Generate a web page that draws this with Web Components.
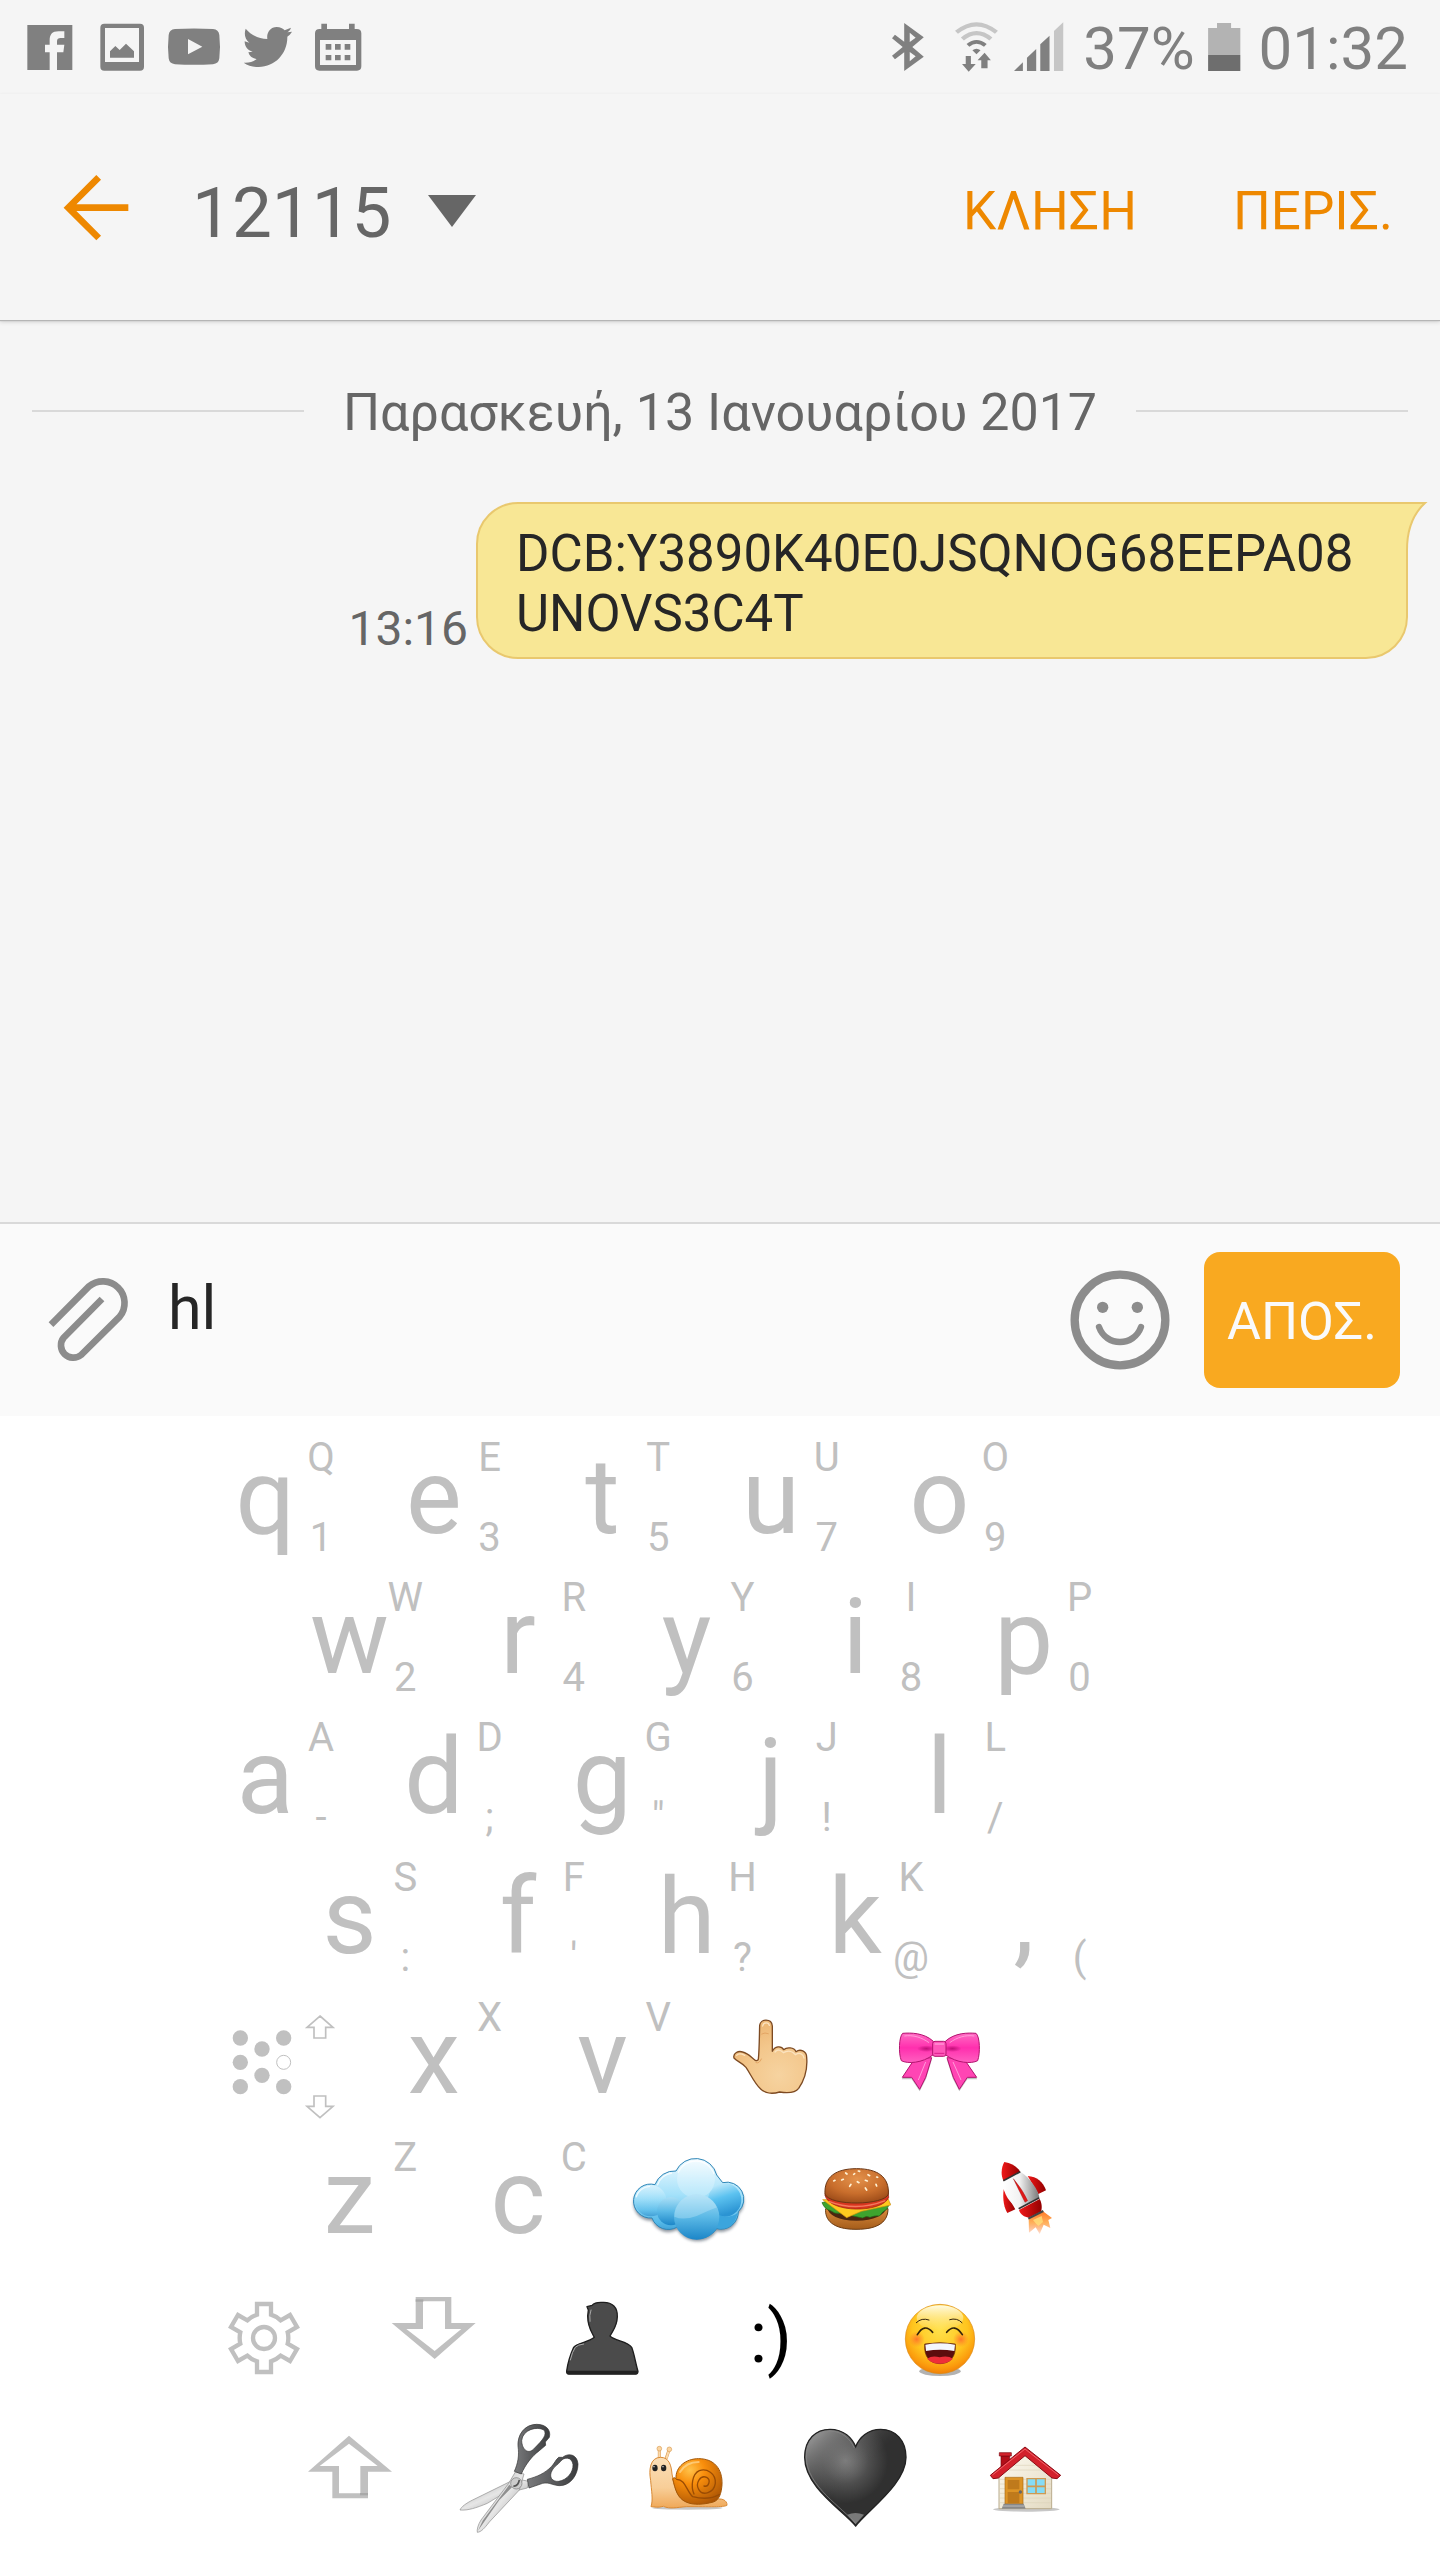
<!DOCTYPE html>
<html lang="el">
<head>
<meta charset="utf-8">
<meta name="viewport" content="width=device-width, initial-scale=1">
<title>12115</title>
<style>
  html, body { margin: 0; background: #fff; }
  body { font-family: Roboto, "Liberation Sans", sans-serif; }
</style>
</head>
<body>
<messaging-app></messaging-app>

<script>
const define = (name, html, setup) => {
  const template = document.createElement('template');
  template.innerHTML = html;
  customElements.define(name, class extends HTMLElement {
    constructor() {
      super();
      this.attachShadow({ mode: 'open' }).append(template.content.cloneNode(true));
    }
    connectedCallback() { if (setup) setup(this, this.shadowRoot); }
  });
};

/* ---------- key artwork ---------- */
const art = {
  dots: `<svg viewBox="-87 21 504 420"><g fill="#c0c0c0">
    <circle cx="94" cy="174" r="23"/><circle cx="94" cy="247" r="23"/><circle cx="94" cy="320" r="23"/>
    <circle cx="159" cy="207" r="23"/><circle cx="159" cy="286" r="23"/>
    <circle cx="224" cy="174" r="23"/><circle cx="224" cy="320" r="23"/></g>
    <g fill="none" stroke="#c0c0c0"><circle cx="224" cy="247" r="21" stroke-width="3"/>
    <path stroke-width="5" d="M333 108L372 142H350V174H315V142H294ZM333 413L372 379H350V348H315V379H294Z"/></g></svg>`,
  gear: `<svg viewBox="-87 -9 504 420"><g transform="translate(165 204)" fill="none" stroke="#c0c0c0" stroke-width="13">
    <circle r="33"/>
    <path d="M-21-102H21V-70A73 73 0 0 1 50-53L78-69L99-33L71-17A73 73 0 0 1 71 17L99 33L78 69L50 53A73 73 0 0 1 21 70V102H-21V70A73 73 0 0 1-50 53L-78 69L-99 33L-71 17A73 73 0 0 1-71-17L-99-33L-78-69L-50-53A73 73 0 0 1-21-70Z"/></g></svg>`,
  down: `<svg viewBox="418 -9 504 420"><path fill="#c0c0c0" fill-rule="evenodd" d="M618 81H725V159H798L675 267L546 159H618ZM640 94V177H590L675 243L755 177H706V94Z"/><path fill="#a9a9a9" d="M618 88H641V95H618Z"/></svg>`,
  up: `<svg viewBox="165 411 504 420"><path fill="#c0c0c0" fill-rule="evenodd" d="M417 497L546 605H474V685H367V605H294ZM417 521L329 588H387V670H451V588H503Z"/><path fill="#a9a9a9" d="M450 669H474V676H450Z"/></svg>`,
  hand: `<svg viewBox="260 -9 504 420"><defs>
    <radialGradient id="g" cx=".62" cy=".75" r=".7"><stop offset="0" stop-color="#f6d3a0"/><stop offset=".6" stop-color="#f3c78c"/><stop offset="1" stop-color="#eeb978"/></radialGradient></defs>
    <path fill="url(#g)" stroke="#7d4a22" stroke-width="4" stroke-linejoin="round" d="M477 208C480 180 480 140 481 106C483 86 517 84 519 108L519 184C526 168 546 166 553 179C562 171 584 171 590 185C602 176 622 182 622 202C625 236 615 270 598 295C585 312 560 309 541 306C515 314 498 310 484 297C464 278 455 254 440 232C428 218 412 214 404 204C400 188 418 182 430 186C448 190 457 204 468 211C472 213 476 211 477 208Z"/>
    <path fill="none" stroke="#fbe3c0" stroke-width="4" stroke-linecap="round" d="M490 108C492 96 508 96 510 106M412 196C418 189 428 192 436 196M527 186C534 176 545 180 552 188C566 180 580 184 588 194C602 186 612 192 614 204"/>
    <path fill="none" stroke="#e3a564" stroke-width="3" stroke-linecap="round" d="M487 132Q497 126 507 131M486 207Q480 222 470 218"/></svg>`,
  bow: `<svg viewBox="765 -9 504 420"><defs>
    <linearGradient id="g" x1="0" y1="0" x2="0" y2="1"><stop offset="0" stop-color="#ff6cc4"/><stop offset=".5" stop-color="#ff2fae"/><stop offset="1" stop-color="#ff5fc0"/></linearGradient>
    <radialGradient id="d"><stop offset="0" stop-color="#c00f78"/><stop offset="1" stop-color="#c00f78" stop-opacity="0"/></radialGradient></defs>
    <path opacity=".25" d="M942 219L908 268L938 268L962 304L981 267L999 208ZM1100 219L1135 268L1105 268L1081 304L1062 267L1043 208Z"/>
    <g stroke="#b3146f" stroke-width="3" stroke-linejoin="round">
    <path fill="#ff45b4" d="M942 214L910 262L938 262L962 298L980 262L998 203L968 205Z"/>
    <path fill="#ff45b4" d="M1100 214L1133 262L1105 262L1081 298L1063 262L1044 203L1072 205Z"/>
    <path fill="url(#g)" d="M1003 154C975 128 935 128 911 130C900 140 898 190 907 212C925 222 970 220 1003 194Z"/>
    <path fill="url(#g)" d="M1039 154C1067 128 1107 128 1131 130C1143 140 1144 190 1136 212C1118 222 1073 220 1039 194Z"/></g>
    <ellipse cx="982" cy="176" rx="28" ry="10" fill="url(#d)"/><ellipse cx="1060" cy="176" rx="28" ry="10" fill="url(#d)"/>
    <path fill="none" stroke="#ff9bd8" stroke-width="3" d="M916 138C942 134 968 142 990 158M1126 138C1100 134 1074 142 1052 158M980 216L958 270M1062 216L1086 270"/>
    <rect x="1001" y="154" width="40" height="45" rx="7" fill="#ff57ba" stroke="#b3146f" stroke-width="3"/>
    <path stroke="#ff9bd8" stroke-width="4" d="M1007 162H1035"/><path stroke="#d91f8c" stroke-width="3" d="M1006 190H1036"/></svg>`,
  cloud: `<svg viewBox="6 411 504 420"><defs>
    <linearGradient id="g" x1="0" y1="0" x2="0" y2="1"><stop offset="0" stop-color="#f2fbff"/><stop offset=".45" stop-color="#a4e1fa"/><stop offset=".8" stop-color="#55b9e8"/><stop offset="1" stop-color="#2484c4"/></linearGradient>
    <linearGradient id="p" x1="0" y1="0" x2="0" y2="1"><stop offset="0" stop-color="#a9def6"/><stop offset=".5" stop-color="#5bb9e6"/><stop offset="1" stop-color="#1c86c8"/></linearGradient>
    <linearGradient id="r" x1="0" y1="0" x2=".3" y2="1"><stop offset="0" stop-color="#d8f3fd"/><stop offset=".5" stop-color="#5cc2f0"/><stop offset="1" stop-color="#2b94d3"/></linearGradient>
    <filter id="b" x="-20%" y="-20%" width="140%" height="150%"><feGaussianBlur stdDeviation="5"/></filter></defs>
    <path filter="url(#b)" opacity=".5" fill="#234" d="M165 592A62 62 0 0 1 228 551A65 65 0 0 1 350 563L368 586A51 51 0 0 1 415 673A52 52 0 0 1 350 724A70 70 0 0 1 232 719A52 52 0 0 1 156 692A51 51 0 1 1 165 592Z"/>
    <path fill="url(#g)" stroke="#2e86b8" stroke-width="3" d="M165 584A62 62 0 0 1 228 543A65 65 0 0 1 350 555L368 578A51 51 0 0 1 415 665A52 52 0 0 1 350 716A70 70 0 0 1 232 711A52 52 0 0 1 156 684A51 51 0 1 1 165 584Z"/>
    <circle cx="374" cy="630" r="50" fill="url(#r)"/><path fill="#3ba5dd" d="M324 640Q340 690 350 714Q400 725 413 668Q400 680 374 680Q340 676 324 640Z"/>
    <circle cx="152" cy="632" r="47" fill="url(#g)" opacity=".55"/>
    <circle cx="213" cy="664" r="42" fill="url(#p)"/>
    <circle cx="288" cy="567" r="57" fill="#fff" opacity=".25"/>
    <circle cx="290" cy="681" r="68" fill="url(#p)"/><path fill="#e4f7ff" opacity=".28" d="M223 680A67 67 0 0 1 351 652Q320 664 290 678Q250 692 223 680Z"/>
    <path fill="none" stroke="#fff" stroke-width="4" opacity=".75" d="M234 548A58 58 0 0 1 342 552M172 586A52 52 0 0 1 216 549M108 622A45 45 0 0 1 150 589"/></svg>`,
  burger: `<svg viewBox="512 411 504 420"><defs>
    <radialGradient id="g" cx=".5" cy=".3" r=".7"><stop offset="0" stop-color="#e3924c"/><stop offset=".6" stop-color="#c96e2c"/><stop offset="1" stop-color="#a04e1a"/></radialGradient>
    <linearGradient id="p" x1="0" y1="0" x2="0" y2="1"><stop offset="0" stop-color="#d98a3c"/><stop offset="1" stop-color="#a45c1a"/></linearGradient></defs>
    <path fill="url(#p)" stroke="#6c3b12" stroke-width="3" d="M679 656C676 690 700 718 770 718C842 718 866 692 866 656Z"/>
    <path fill="#4b2610" d="M682 650Q690 690 772 692Q850 690 864 650Z"/>
    <path fill="#3ea42e" stroke="#1f6a1a" stroke-width="2" d="M668 638Q676 658 694 662Q706 672 722 670L790 684Q800 676 812 682Q826 676 840 678Q850 664 862 658L872 640Q770 600 668 638Z"/>
    <path fill="#ffc91f" stroke="#d6920e" stroke-width="2" d="M670 629L742 683L786 664L874 645L866 625Z"/>
    <path fill="#d8351f" stroke="#8e1b10" stroke-width="2" d="M677 616C690 670 850 670 868 622L866 600H680Z"/><path fill="none" stroke="#f47a5e" stroke-width="4" d="M688 634Q770 666 858 632"/>
    <path fill="url(#g)" stroke="#6b3512" stroke-width="3" d="M677 612C674 560 710 536 772 536C836 536 870 562 867 612C858 646 690 650 677 612Z"/>
    <g stroke="#fff3d6" stroke-width="5" stroke-linecap="round"><path d="M739 549L743 552M763 553L766 551M777 543L781 544M806 554L811 557M832 561L835 562M703 573L707 571M727 570L732 568M751 589L755 583M774 575L779 578M798 571L804 573M798 594L802 600M830 583L832 588"/></g></svg>`,
  rocket: `<svg viewBox="1018 411 504 420"><defs>
    <linearGradient id="g"><stop offset="0" stop-color="#fff"/><stop offset=".45" stop-color="#f2f2f2"/><stop offset="1" stop-color="#777"/></linearGradient>
    <linearGradient id="r"><stop offset="0" stop-color="#f01818"/><stop offset="1" stop-color="#920000"/></linearGradient>
    <linearGradient id="f" x1="0" y1="0" x2="0" y2="1"><stop offset="0" stop-color="#ff7a2a"/><stop offset=".5" stop-color="#ffb05a"/><stop offset="1" stop-color="#ff8a50" stop-opacity=".25"/></linearGradient></defs>
    <path fill="url(#f)" d="M1287 686L1330 664L1357 684L1346 690L1352 714L1332 704L1320 732L1308 712L1288 728Z"/>
    <path fill="#ffe07a" d="M1300 690L1326 678L1330 696L1316 708L1308 700Z" opacity=".8"/>
    <path fill="url(#r)" d="M1284 558C1312 560 1330 575 1339 601L1316 612Z"/>
    <path fill="url(#r)" d="M1212 598C1208 630 1214 655 1223 669L1247 658Z"/>
    <path fill="url(#g)" d="M1211 572L1262 545C1290 562 1316 600 1319 622L1257 656C1230 640 1206 606 1211 572Z"/>
    <path fill="url(#r)" d="M1214 516C1238 520 1254 532 1262 545L1211 572C1202 552 1206 530 1214 516Z"/>
    <path fill="none" stroke="#333" stroke-width="5" d="M1211 572L1262 545M1257 656L1319 623"/>
    <path fill="#e01818" stroke="#8b0d0d" stroke-width="1" d="M1241 566Q1270 600 1284 632L1276 637Q1260 605 1241 566Z"/>
    <path fill="url(#r)" d="M1258 660L1320 627C1328 642 1327 656 1324 665L1287 683C1274 681 1262 674 1258 660Z"/>
    <path stroke="#444" stroke-width="6" d="M1286 686L1331 663"/></svg>`,
  person: `<svg viewBox="924 -9 504 420">
    <path fill="#4b4b4b" stroke="#1e1e1e" stroke-width="4" stroke-linejoin="round" d="M1134 110L1149 106C1160 94 1175 98 1184 97C1210 97 1226 112 1225 140C1224 170 1212 180 1203 198C1218 214 1255 212 1268 232C1276 252 1280 282 1287 304Q1286 312 1280 312H1080Q1072 312 1073 303C1076 280 1086 250 1094 232C1104 218 1138 218 1156 202C1148 186 1136 172 1136 138L1138 120Z"/>
    <path fill="#222" d="M1074 302H1286Q1286 313 1280 313H1080Q1073 313 1074 302Z"/>
    <path fill="none" stroke="#aaa" stroke-width="3" stroke-linecap="round" d="M1146 120Q1140 136 1143 154M1084 270Q1090 244 1099 232Q1106 224 1124 222"/></svg>`,
  grin: `<svg viewBox="765 -9 504 420"><defs>
    <radialGradient id="g" cx=".5" cy=".36" r=".66"><stop offset="0" stop-color="#ffe14a"/><stop offset=".6" stop-color="#ffc51e"/><stop offset=".85" stop-color="#fb9a0c"/><stop offset="1" stop-color="#ee7a08"/></radialGradient>
    <linearGradient id="h" x1="0" y1="0" x2="0" y2="1"><stop offset="0" stop-color="#fffbe0"/><stop offset="1" stop-color="#fff6b8" stop-opacity="0"/></linearGradient>
    <radialGradient id="k"><stop offset="0" stop-color="#ff6a2a" stop-opacity=".85"/><stop offset="1" stop-color="#ff7a2a" stop-opacity="0"/></radialGradient></defs>
    <ellipse cx="1023" cy="304" rx="62" ry="14" fill="#000" opacity=".3"/>
    <circle cx="1023" cy="207" r="104" fill="url(#g)" stroke="#d98a12" stroke-width="2"/>
    <ellipse cx="1023" cy="144" rx="70" ry="38" fill="url(#h)"/>
    <circle cx="953" cy="208" r="24" fill="url(#k)"/><circle cx="1086" cy="208" r="24" fill="url(#k)"/>
    <g fill="none" stroke="#33230a" stroke-linecap="round"><path stroke-width="5" d="M955 194Q976 158 1001 187M1043 187Q1067 158 1090 194"/><path stroke-width="3" d="M952 158Q968 142 990 150M1052 149Q1074 142 1089 158"/></g>
    <path fill="#5d0d0d" stroke="#6b3408" stroke-width="2" d="M977 222Q1023 214 1069 222C1072 262 1052 281 1023 281C994 281 974 262 977 222Z"/>
    <path fill="#ee2f39" d="M984 266Q1000 256 1022 262Q1046 256 1062 266Q1046 281 1023 281Q999 281 984 266Z"/>
    <path fill="#f4f7fc" d="M979 224Q1023 216 1068 224L1066 243Q1023 236 981 243Z"/></svg>`,
  scissors: `<svg viewBox="671 411 504 420"><defs>
    <linearGradient id="g" x1="0" y1="0" x2="1" y2="1"><stop offset="0" stop-color="#9a9a9a"/><stop offset=".5" stop-color="#e6e6e6"/><stop offset="1" stop-color="#8c8c8c"/></linearGradient>
    <linearGradient id="h"><stop offset="0" stop-color="#7a7b7d"/><stop offset="1" stop-color="#3b3c3e"/></linearGradient></defs>
    <path fill="url(#g)" stroke="#8d8d8d" stroke-width="2" d="M958 634L920 626L790 690C770 700 756 710 752 720C776 722 800 714 834 700L880 672L954 654Z"/>
    <path fill="url(#g)" stroke="#8d8d8d" stroke-width="2" d="M918 606L898 640L815 750C806 764 802 780 804 787C816 786 826 774 840 756L930 660L944 612Z"/>
    <path fill="#8f8f8f" d="M900 644L820 752L806 782L870 690L908 652Z"/>
    <path fill="url(#h)" fill-rule="evenodd" stroke="#333" stroke-width="2" d="M915 604C926 580 930 556 926 528C924 494 946 463 982 463C1010 463 1026 480 1020 502L1008 516L1009 526L990 542C968 558 948 584 936 612ZM937 512C938 540 958 556 976 534C1000 510 1014 494 1004 480C984 468 940 478 937 512Z"/>
    <path fill="url(#h)" fill-rule="evenodd" stroke="#333" stroke-width="2" d="M954 628C984 620 1006 610 1026 590C1036 580 1038 570 1048 562L1060 562C1076 548 1104 552 1106 582C1106 616 1082 648 1050 647C1030 646 1020 636 1000 640L959 654ZM1029 600C1016 622 1030 636 1048 634C1074 630 1092 606 1091 584C1088 560 1064 560 1054 574C1046 584 1034 590 1029 600Z"/>
    <circle cx="921" cy="640" r="17" fill="#ccc" stroke="#777" stroke-width="2"/><path stroke="#555" stroke-width="5" d="M912 648Q926 650 930 630" fill="none"/></svg>`,
  snail: `<svg viewBox="6 411 504 420"><defs>
    <linearGradient id="g" x1="0" y1="0" x2="0" y2="1"><stop offset="0" stop-color="#fbdfb8"/><stop offset=".6" stop-color="#f8ce98"/><stop offset="1" stop-color="#efa858"/></linearGradient>
    <radialGradient id="s" cx=".35" cy=".25" r=".85"><stop offset="0" stop-color="#ffc24a"/><stop offset=".35" stop-color="#f98e0c"/><stop offset="1" stop-color="#a85204"/></radialGradient></defs>
    <ellipse cx="262" cy="714" rx="106" ry="5" opacity=".22"/>
    <path fill="none" stroke="#d99b52" stroke-width="9" stroke-linecap="round" d="M178 564V540M199 564L207 540"/><path fill="none" stroke="#fbd9ab" stroke-width="6" stroke-linecap="round" d="M178 566V540M199 566L207 540"/>
    <circle cx="178" cy="536" r="7" fill="#fbd6a4" stroke="#d99b52" stroke-width="2"/><circle cx="208" cy="538" r="7" fill="#fbd6a4" stroke="#d99b52" stroke-width="2"/>
    <path fill="url(#g)" stroke="#d98a35" stroke-width="3" d="M153 710C160 690 154 660 152 632C146 600 150 562 182 562C208 562 214 588 216 612C224 660 236 690 270 698L340 690C364 682 382 690 381 706C370 712 330 710 260 710C230 712 210 718 190 709C176 714 160 710 153 710Z"/>
    <path fill="url(#s)" stroke="#a35606" stroke-width="3" d="M228 626C226 590 258 566 296 566C342 566 368 596 366 644C364 670 358 690 340 696C310 704 280 706 258 696C232 684 226 660 218 626Q222 620 228 626Z"/>
    <path fill="none" stroke="#9a4c04" stroke-width="4" stroke-linecap="round" d="M312 648C326 652 334 630 320 622C300 614 286 640 296 658C308 680 342 668 346 640C348 610 320 594 298 602C276 612 272 650 282 672M230 628C256 628 260 664 278 680C310 688 340 684 358 674"/>
    <path fill="none" stroke="#ffe2a8" stroke-width="6" opacity=".6" stroke-linecap="round" d="M240 606Q258 576 296 576"/>
    <ellipse cx="165" cy="594" rx="8" ry="10" fill="#222"/><ellipse cx="191" cy="594" rx="8" ry="10" fill="#222"/><circle cx="162" cy="590" r="2" fill="#fff"/><circle cx="189" cy="590" r="2" fill="#fff"/></svg>`,
  heart: `<svg viewBox="512 411 504 420"><defs>
    <radialGradient id="g" gradientUnits="userSpaceOnUse" cx="738" cy="572" r="128"><stop offset="0" stop-color="#858585"/><stop offset=".55" stop-color="#4e4e4e"/><stop offset="1" stop-color="#303030"/></radialGradient>
    <linearGradient id="h" gradientUnits="userSpaceOnUse" x1="640" y1="490" x2="760" y2="620"><stop offset="0" stop-color="#9a9a9a"/><stop offset="1" stop-color="#555" stop-opacity="0"/></linearGradient></defs>
    <path fill="url(#g)" d="M769 768C730 720 616 652 616 562C616 508 650 478 692 478C734 478 758 505 769 530C780 502 806 478 844 478C888 478 920 510 920 562C920 640 812 715 769 768Z"/>
    <path fill="url(#h)" stroke="#222" stroke-width="4" d="M769 768C730 720 616 652 616 562C616 508 650 478 692 478C734 478 758 505 769 530C780 502 806 478 844 478C888 478 920 510 920 562C920 640 812 715 769 768Z"/>
    <path fill="none" stroke="#888" stroke-width="3" opacity=".7" d="M769 761C732 714 621 648 621 562C621 512 652 483 692 483C728 483 752 506 765 534"/>
    <path fill="#aaa" opacity=".6" d="M769 762L744 734Q768 724 794 734Z"/></svg>`,
  house: `<svg viewBox="1018 411 504 420"><defs>
    <linearGradient id="g" x1="0" y1="0" x2="1" y2="1"><stop offset="0" stop-color="#fdfaf0"/><stop offset="1" stop-color="#e3dac2"/></linearGradient></defs>
    <ellipse cx="1280" cy="718" rx="100" ry="7" opacity=".22"/>
    <path fill="#b30f1a" stroke="#7d0710" stroke-width="2" d="M1204 558H1230V590L1204 612Z"/><path fill="#d3222c" stroke="#7d0710" stroke-width="2" d="M1199 548H1235V558H1199Z"/>
    <path fill="url(#g)" stroke="#b9ab8c" stroke-width="3" d="M1198 716V612L1276 550L1356 612V716Z"/>
    <path stroke="#ddd3bb" stroke-width="2" d="M1201 628H1354M1201 642H1354M1201 656H1354M1201 670H1354M1201 684H1354M1201 698H1354M1226 600H1328M1244 586H1310"/>
    <path fill="#d3212c" stroke="#8a0b14" stroke-width="3" stroke-linejoin="round" d="M1276 531L1383 616L1372 626L1357 624L1276 557L1196 624L1180 626L1172 616Z"/>
    <path fill="none" stroke="#f2646a" stroke-width="3" d="M1178 615L1276 537L1376 615"/>
    <path fill="#dd9426" stroke="#a96a14" stroke-width="2" d="M1216 622H1270V702H1216Z"/><path fill="#bf7a1c" d="M1224 630H1259V658H1224ZM1224 666H1259V700H1224Z"/><circle cx="1262" cy="666" r="5" fill="#666"/>
    <path fill="#888" d="M1212 701H1272L1278 716H1206Z"/><path stroke="#bbb" stroke-width="3" d="M1210 708H1274"/>
    <path fill="#85dcf6" stroke="#cf9a52" stroke-width="4" d="M1282 626H1337V671H1282Z"/><path stroke="#cf9a52" stroke-width="5" d="M1309 626V671M1282 649H1337"/></svg>`
};

/* ---------- status bar ---------- */
define('status-bar', `
<style>
  :host { display: flex; align-items: center; justify-content: space-between; height: 94px; padding: 0 32px 0 22px; color: #808080; font-size: 60px; line-height: 70px; }
  .group { display: flex; align-items: center; }
  .apps { gap: 16px; } .system { gap: 12px; }
  span, time { padding-top: 4px; }
  svg { display: block; height: 56px; width: 56px; fill: #808080; }
  .bluetooth { width: 51px; } .wifi { width: 47px; } .signal { width: 57px; } .battery { width: 40px; }
</style>
<div class="group apps">
  <svg viewBox="66 57 168 168"><path fill-rule="evenodd" d="M82 75H217V210H171V157H190L193 134H171V124C171 116 175 114 182 114H193V94H176C156 94 149 104 149 121V134H135V157H149V210H82Z"/></svg>
  <svg viewBox="282 57 168 168"><path fill-rule="evenodd" d="M313 71H420Q432 71 432 83V200Q432 212 420 212H313Q301 212 301 200V83Q301 71 313 71ZM315 84V186H417V84ZM330 154L346 138L359 150L378 131L402 154V173H330Z"/></svg>
  <svg viewBox="498 57 168 168"><path fill-rule="evenodd" d="M525 87Q582 84 639 87Q656 89 658 105Q662 140 658 175Q656 191 639 193Q582 196 525 193Q508 191 506 175Q502 140 506 105Q508 89 525 87ZM564 117V163L607 140Z"/></svg>
  <svg viewBox="714 57 168 168"><path d="M737 86C752 104 775 117 802 117C799 98 811 81 830 81C841 81 849 85 854 91L873 83C871 90 867 94 862 97L876 95C872 102 867 106 862 110C863 160 826 201 776 201C760 201 744 197 731 188C746 189 759 186 770 177C757 176 748 168 745 157L758 155C743 151 734 140 734 124L748 128C734 118 732 101 737 86Z"/></svg>
  <svg viewBox="930 57 168 168"><path fill-rule="evenodd" d="M964 71H981V87H1047V71H1064V87H1070Q1084 87 1084 100V199Q1084 212 1071 212H958Q945 212 945 199V100Q945 87 959 87H964ZM960 120V195H1068V120ZM977 132H994V149H977ZM1005 132H1022V149H1005ZM1034 132H1051V149H1034ZM977 165H994V181H977ZM1005 165H1022V181H1005ZM1034 165H1051V181H1034Z"/></svg>
</div>
<div class="group system">
  <svg class="bluetooth" viewBox="86 57 138 168" preserveAspectRatio="none"><path fill-rule="evenodd" d="M119 69L172 112L141 141L172 170L119 213V157L94 178L86 167L115 141L86 115L94 104L119 125ZM134 98V126L150 113ZM134 156V184L150 169Z"/></svg>
  <svg class="wifi" viewBox="257 57 127 168" preserveAspectRatio="none">
    <g fill="none" stroke="#c6c6c6" stroke-width="12"><path d="M261 97Q315 49 369 97M277 117Q315 82 354 117"/></g>
    <path fill="none" stroke="#808080" stroke-width="11" d="M292 136Q315 115 339 136"/>
    <path d="M304 151Q315 141 326 151L315 163ZM286 168H300V192H313L294 215L276 192H286ZM337 158L354 181H345V205H328V181H318Z"/></svg>
  <svg class="signal" viewBox="416 57 154 168" preserveAspectRatio="none"><path d="M440 187V213H416ZM476 147V213H451V173ZM512 107V213H487V133Z"/><path fill="#c6c6c6" d="M549 67V213H524V93Z"/></svg>
  <span>37%</span>
  <svg class="battery" viewBox="935 57 108 168" preserveAspectRatio="none"><path fill="#b3b3b3" d="M962 69H1000V84H1025V165H938V84H962Z"/><path fill="#6e6e6e" d="M938 165H1025V213H938Z"/></svg>
  <time>01:32</time>
</div>`);

/* ---------- conversation header ---------- */
define('app-header', `
<style>
  :host { display: flex; align-items: center; box-sizing: border-box; height: 226px; padding: 8px 47px 0 61px; position: relative; box-shadow: 0 1px 1px #b5b5b5, 0 2px 4px #cfcfcf; background: #f5f5f5; }
  button { border: 0; background: none; padding: 0; font: inherit; display: flex; align-items: center; }
  svg { display: block; }
  .back svg { width: 72px; height: 72px; }
  h1 { margin: 0 0 0 59px; font-size: 71px; line-height: 84px; font-weight: 400; }
  h1 button { gap: 36px; color: #666; }
  h1 span { padding-top: 3px; }
  .arrow { width: 48px; height: 32px; fill: #666; }
  nav { display: flex; gap: 96px; margin-left: auto; }
  nav button { color: #ee8800; font-size: 53px; line-height: 62px; }
</style>
<button class="back" aria-label="Πίσω"><svg viewBox="183 525 216 216"><path fill="none" stroke="#ee8800" stroke-width="20" d="M296 532L205 623L296 714M213 623H385"/></svg></button>
<h1><button><span>12115</span><svg class="arrow" viewBox="0 0 48 32"><path d="M0 0H48L24 32Z"/></svg></button></h1>
<nav><button>ΚΛΗΣΗ</button><button>ΠΕΡΙΣ.</button></nav>`);

/* ---------- thread ---------- */
define('date-divider', `
<style>
  :host { display: flex; align-items: center; gap: 39px; font-size: 52px; line-height: 60px; color: #666; }
  :host::before, :host::after { content: ""; flex: 1; height: 2px; background: #d9d9d9; }
  span { padding: 4px 0 0; }
</style><span><slot></slot></span>`);

define('message-bubble', `
<style>
  :host { display: flex; justify-content: flex-end; align-items: flex-end; gap: 8px; }
  time { font-size: 48px; line-height: 56px; color: #666; margin-bottom: 2px; }
  p { position: relative; box-sizing: border-box; width: 932px; margin: 0; padding: 20px 38px 13px; border: 2px solid #e9c86e; border-radius: 42px 0 42px 42px; background: #f8e795; color: #262626; font-size: 51px; line-height: 60px; overflow-wrap: anywhere; }
  svg { position: absolute; top: -2px; right: -22px; width: 23px; height: 48px; }
</style>
<time><slot name="time"></slot></time>
<p><slot></slot><svg viewBox="0 0 23 48"><path fill="#f8e795" d="M0 1H20C8 10 2 28 2 48H0Z"/><path fill="none" stroke="#e9c86e" stroke-width="2" d="M0 1H20C8 12 2 28 2 48"/></svg></p>`);

define('message-thread', `
<style>
  :host { display: flex; flex-direction: column; flex: 1; gap: 59px; padding: 59px 32px 0; }
</style><slot></slot>`);

/* ---------- composer ---------- */
define('message-composer', `
<style>
  :host { display: flex; align-items: center; box-sizing: border-box; height: 194px; padding: 0 40px 0 41px; border-top: 2px solid #d9d9d9; background: #fafafa; }
  button { border: 0; background: none; padding: 0; font: inherit; }
  svg { display: block; fill: none; stroke: #8c8c8c; }
  .clip { width: 96px; height: 96px; }
  .smile { width: 100px; height: 100px; }
  input { flex: 1; min-width: 0; border: 0; outline: 0; background: none; font: inherit; font-size: 61px; line-height: 72px; height: 72px; color: #262626; padding: 0 0 24px; margin: 0 24px 0 31px; }
  .send { margin-left: 34px; width: 196px; height: 136px; padding-top: 4px; border-radius: 16px; background: #f9a920; color: #fafafa; font-size: 52px; line-height: 60px; }
</style>
<button aria-label="Επισύναψη"><svg class="clip" viewBox="120 188 288 288"><path stroke-width="20" d="M150 346L264 231A65 65 0 0 1 356 322L240 437A37 37 0 0 1 188 385L303 269"/></svg></button>
<input type="text" aria-label="Μήνυμα" value="hl">
<button aria-label="Emoji"><svg class="smile" viewBox="210 180 300 300"><circle cx="360" cy="330" r="136" stroke-width="25"/><path stroke-width="19" stroke-linecap="round" d="M297 351C318 411 402 411 423 351"/><g fill="#8c8c8c" stroke="none"><circle cx="308" cy="292" r="17"/><circle cx="412" cy="292" r="17"/></g></svg></button>
<button class="send">ΑΠΟΣ.</button>`);

/* ---------- keyboard ---------- */
define('key-cap', `
<style>
  :host { display: block; grid-column: span 2; }
  :host([shifted]) { grid-column: 2 / span 2; }
  button { display: grid; grid-template: 51px 1fr 49px / 1fr 55px; width: 100%; height: 140px; padding: 0; border: 0; background: none; color: #c0c0c0; font: inherit; align-items: center; justify-items: center; }
  .main { grid-area: 1 / 1 / -1 / -1; font-size: 105px; line-height: 120px; padding: 2px 0 0 2px; }
  :host([art]) .main { padding: 0; }
  :host([plain]) .main { font-size: 72px; line-height: 84px; color: #000; }
  .upper, .lower { grid-column: 2; font-size: 40px; line-height: 40px; }
  .upper { grid-row: 1; align-self: end; } .lower { grid-row: 3; align-self: start; }
  svg { display: block; width: 168px; height: 140px; overflow: visible; }
</style>
<button><span class="main"></span><span class="upper"></span><span class="lower"></span></button>`,
(host, root) => {
  const main = root.querySelector('.main');
  const icon = host.getAttribute('art');
  if (icon) {
    main.innerHTML = art[icon];
    root.querySelector('button').setAttribute('aria-label', icon);
  } else main.textContent = host.getAttribute('main');
  for (const part of ['upper', 'lower']) {
    const span = root.querySelector('.' + part), text = host.getAttribute(part);
    if (text) span.textContent = text; else span.remove();
  }
});

define('key-board', `
<style>
  :host { display: flex; flex-direction: column; padding: 11px 333px 13px 180px; background: #fff; }
  .row { display: grid; grid-template-columns: repeat(11, minmax(0, 1fr)); }
</style>`,
(host, root) => {
  const rows = [
    ['q Q 1', 'e E 3', 't T 5', 'u U 7', 'o O 9'],
    ['w W 2', 'r R 4', 'y Y 6', 'i I 8', 'p P 0'],
    ['a A -', 'd D ;', 'g G "', 'j J !', 'l L /'],
    ['s S :', "f F '", 'h H ?', 'k K @', ',  ('],
    ['#dots', 'x X', 'v V', '#hand', '#bow'],
    ['z Z', 'c C', '#cloud', '#burger', '#rocket'],
    ['#gear', '#down', '#person', ':)', '#grin'],
    ['#up', '#scissors', '#snail', '#heart', '#house']
  ];
  rows.forEach((keys, index) => {
    const row = document.createElement('div');
    row.className = 'row';
    keys.forEach((spec, column) => {
      const key = document.createElement('key-cap');
      if (index % 2 && !column) key.setAttribute('shifted', '');
      if (spec[0] === '#') key.setAttribute('art', spec.slice(1));
      else {
        const [main, upper, lower] = spec.split(' ');
        key.setAttribute('main', main);
        if (main === ':)') key.setAttribute('plain', '');
        if (upper) key.setAttribute('upper', upper);
        if (lower) key.setAttribute('lower', lower);
      }
      row.append(key);
    });
    root.append(row);
  });
});

define('messaging-app', `
<style>
  :host { display: flex; flex-direction: column; min-height: 100vh; background: #f5f5f5; }
</style>
<status-bar></status-bar>
<app-header></app-header>
<message-thread>
  <date-divider>Παρασκευή, 13 Ιανουαρίου 2017</date-divider>
  <message-bubble><span slot="time">13:16</span>DCB:Y3890K40E0JSQNOG68EEPA08UNOVS3C4T</message-bubble>
</message-thread>
<message-composer></message-composer>
<key-board></key-board>`);
</script>
</body>
</html>
